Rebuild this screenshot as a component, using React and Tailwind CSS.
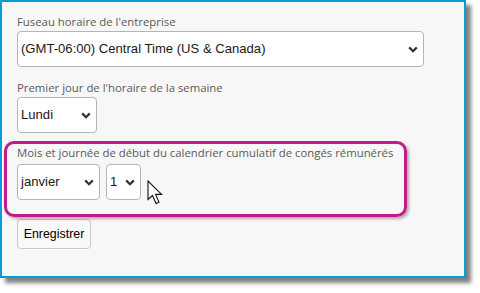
import React from "react";

function Chevron() {
  return (
    <svg width="10" height="7" viewBox="0 0 10 7" className="shrink-0">
      <path d="M1.2 1.4 L5 5.2 L8.8 1.4" fill="none" stroke="#333" strokeWidth="2.2" strokeLinecap="butt" />
    </svg>
  );
}

function FakeSelect({ value, className }) {
  return (
    <div
      className={
        "flex items-center justify-between bg-white border border-[#b5b5b5] rounded-[4px] pl-[3px] pr-[5px] text-[13.1px] text-[#1a1a1a] " +
        className
      }
      style={{ fontFamily: '"Liberation Sans", Arial, sans-serif' }}
    >
      <span>{value}</span>
      <Chevron />
    </div>
  );
}

function Label({ children }) {
  return (
    <div
      className="text-[11.35px] leading-[17px] text-[#5a5a5a] whitespace-nowrap"
      style={{ fontFamily: '"Open Sans", "Noto Sans", sans-serif' }}
    >
      {children}
    </div>
  );
}

export default function App() {
  return (
    <div className="w-[480px] h-[293px] bg-white relative overflow-hidden">
      <div className="w-[466px] h-[278px] border-2 border-[#0a9bd8] bg-[#f7f7f7] shadow-[5px_5px_4px_rgba(0,0,0,0.5)] pl-[15px] pt-[11px]">
        <Label>Fuseau horaire de l'entreprise</Label>
        <FakeSelect value="(GMT-06:00) Central Time (US & Canada)" className="w-[407px] h-[36px] mt-[1px]" />
        <div className="mt-[12px]">
          <Label>Premier jour de l'horaire de la semaine</Label>
        </div>
        <FakeSelect value="Lundi" className="w-[80px] h-[36px] mt-[1px]" />
        <div className="ml-[-13px] mt-[8px] w-[403px] h-[76px] border-[3px] border-[#c4198c] rounded-[10px] shadow-[2px_2px_3px_rgba(0,0,0,0.3)] pl-[10px] relative">
          <Label>Mois et journée de début du calendrier cumulatif de congés rémunérés</Label>
          <div className="flex gap-[6px] mt-[3px]">
            <FakeSelect value="janvier" className="w-[83px] h-[36px]" />
            <FakeSelect value="1" className="w-[35px] h-[36px]" />
          </div>
          <svg className="absolute left-[140px] top-[36px]" width="18" height="26" viewBox="0 0 18 26">
            <path d="M1 1 L1 19.5 L5.5 15.5 L9 23.5 L12 22.2 L8.6 14.4 L14.6 14.4 Z" fill="white" stroke="#111" strokeWidth="1.1" strokeLinejoin="miter" />
          </svg>
        </div>
        <button
          className="mt-[2px] h-[30px] w-[74px] border border-[#c8c8c8] rounded-[4px] bg-[#f9f9f9] text-[12.4px] text-black"
          style={{ fontFamily: '"Liberation Sans", Arial, sans-serif' }}
        >
          Enregistrer
        </button>
      </div>
    </div>
  );
}
